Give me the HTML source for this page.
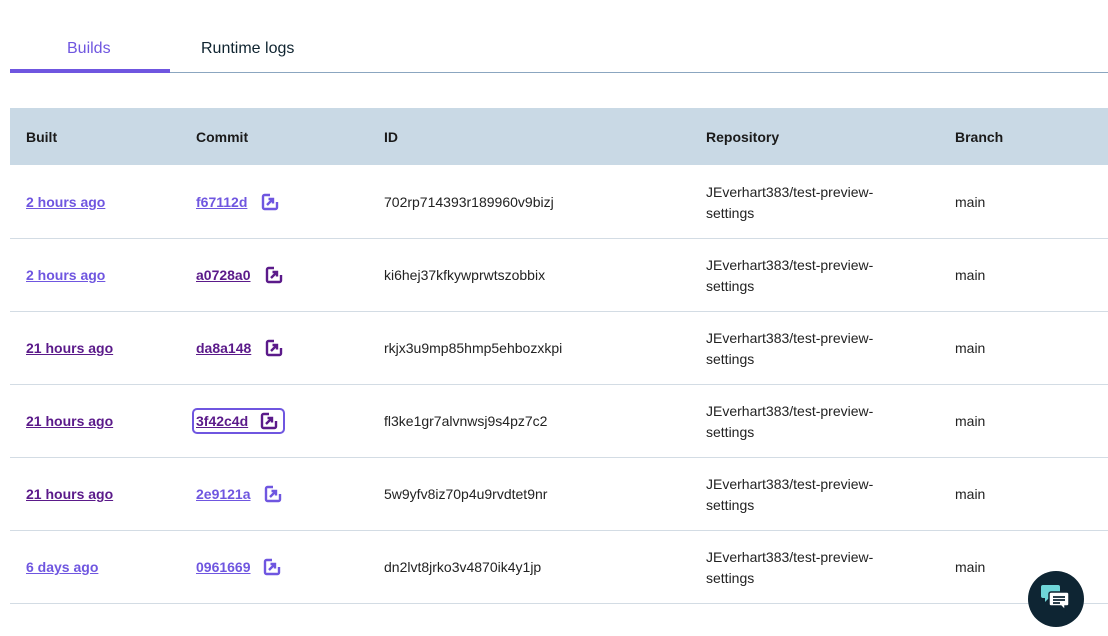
<!DOCTYPE html>
<html><head><meta charset="utf-8"><style>
*{margin:0;padding:0;box-sizing:border-box}
body{width:1108px;height:636px;background:#fff;font-family:"Liberation Sans",sans-serif;position:relative;overflow:hidden;color:#222}
.a{position:absolute;white-space:nowrap}
.tab{font-size:16px;top:40px}
.hdr{position:absolute;left:10px;top:108px;width:1098px;height:57px;background:#c9d9e5}
.h{font-weight:bold;font-size:14px;color:#1a1a1a;top:129px}
.line{position:absolute;left:10px;width:1098px;height:1px;background:#d3dce4}
.t{font-size:14px;color:#222}
a{font-size:14px;font-weight:bold;text-decoration:underline;color:#6f56e0}
a.v{color:#5b1a8a}
svg{position:absolute}
</style></head><body>
<div class="a tab" style="left:67px;color:#6f56e0">Builds</div>
<div class="a tab" style="left:201px;color:#0f2430">Runtime logs</div>
<div style="position:absolute;left:10px;top:72px;width:1098px;height:1px;background:#8ba6c0"></div>
<div style="position:absolute;left:10px;top:69px;width:160px;height:4px;background:#6f56e0"></div>
<div class="hdr"></div>
<div class="a h" style="left:26px">Built</div>
<div class="a h" style="left:196px">Commit</div>
<div class="a h" style="left:384px">ID</div>
<div class="a h" style="left:706px">Repository</div>
<div class="a h" style="left:955px">Branch</div>

<div class="line" style="top:238px"></div>
<div class="line" style="top:311px"></div>
<div class="line" style="top:384px"></div>
<div class="line" style="top:457px"></div>
<div class="line" style="top:530px"></div>
<div class="line" style="top:603px"></div>

<a class="a" style="left:26px;top:194px">2 hours ago</a>
<a class="a" style="left:196px;top:194px">f67112d</a>
<div class="a t" style="left:384px;top:194px">702rp714393r189960v9bizj</div>

<a class="a" style="left:26px;top:267px">2 hours ago</a>
<a class="a v" style="left:196px;top:267px">a0728a0</a>
<div class="a t" style="left:384px;top:267px">ki6hej37kfkywprwtszobbix</div>

<a class="a v" style="left:26px;top:340px">21 hours ago</a>
<a class="a v" style="left:196px;top:340px">da8a148</a>
<div class="a t" style="left:384px;top:340px">rkjx3u9mp85hmp5ehbozxkpi</div>

<a class="a v" style="left:26px;top:413px">21 hours ago</a>
<div style="position:absolute;left:192px;top:408px;width:93px;height:26px;border:2px solid #6f56e0;border-radius:5px"></div>
<a class="a v" style="left:196px;top:413px">3f42c4d</a>
<div class="a t" style="left:384px;top:413px">fl3ke1gr7alvnwsj9s4pz7c2</div>

<a class="a v" style="left:26px;top:486px">21 hours ago</a>
<a class="a" style="left:196px;top:486px">2e9121a</a>
<div class="a t" style="left:384px;top:486px">5w9yfv8iz70p4u9rvdtet9nr</div>

<a class="a" style="left:26px;top:559px">6 days ago</a>
<a class="a" style="left:196px;top:559px">0961669</a>
<div class="a t" style="left:384px;top:559px">dn2lvt8jrko3v4870ik4y1jp</div>

<div class="a t" style="left:706px;top:182px;line-height:21px">JEverhart383/test-preview-<br>settings</div>
<div class="a t" style="left:706px;top:255px;line-height:21px">JEverhart383/test-preview-<br>settings</div>
<div class="a t" style="left:706px;top:328px;line-height:21px">JEverhart383/test-preview-<br>settings</div>
<div class="a t" style="left:706px;top:401px;line-height:21px">JEverhart383/test-preview-<br>settings</div>
<div class="a t" style="left:706px;top:474px;line-height:21px">JEverhart383/test-preview-<br>settings</div>
<div class="a t" style="left:706px;top:547px;line-height:21px">JEverhart383/test-preview-<br>settings</div>
<div class="a t" style="left:955px;top:194px">main</div>
<div class="a t" style="left:955px;top:267px">main</div>
<div class="a t" style="left:955px;top:340px">main</div>
<div class="a t" style="left:955px;top:413px">main</div>
<div class="a t" style="left:955px;top:486px">main</div>
<div class="a t" style="left:955px;top:559px">main</div>

<svg style="left:261px;top:193px" width="18" height="18" viewBox="0 0 18 18" fill="none" stroke="#6f56e0" stroke-width="2.4"><path d="M9 2H3.5A1.5 1.5 0 0 0 2 3.5v11A1.5 1.5 0 0 0 3.5 16h11a1.5 1.5 0 0 0 1.5-1.5V9"/><path d="M6 12l6-6M7.5 6H12v4.5"/></svg>
<svg style="left:265px;top:266px" width="18" height="18" viewBox="0 0 18 18" fill="none" stroke="#5b1a8a" stroke-width="2.4"><path d="M9 2H3.5A1.5 1.5 0 0 0 2 3.5v11A1.5 1.5 0 0 0 3.5 16h11a1.5 1.5 0 0 0 1.5-1.5V9"/><path d="M6 12l6-6M7.5 6H12v4.5"/></svg>
<svg style="left:265px;top:339px" width="18" height="18" viewBox="0 0 18 18" fill="none" stroke="#5b1a8a" stroke-width="2.4"><path d="M9 2H3.5A1.5 1.5 0 0 0 2 3.5v11A1.5 1.5 0 0 0 3.5 16h11a1.5 1.5 0 0 0 1.5-1.5V9"/><path d="M6 12l6-6M7.5 6H12v4.5"/></svg>
<svg style="left:260px;top:412px" width="18" height="18" viewBox="0 0 18 18" fill="none" stroke="#5b1a8a" stroke-width="2.4"><path d="M9 2H3.5A1.5 1.5 0 0 0 2 3.5v11A1.5 1.5 0 0 0 3.5 16h11a1.5 1.5 0 0 0 1.5-1.5V9"/><path d="M6 12l6-6M7.5 6H12v4.5"/></svg>
<svg style="left:264px;top:485px" width="18" height="18" viewBox="0 0 18 18" fill="none" stroke="#6f56e0" stroke-width="2.4"><path d="M9 2H3.5A1.5 1.5 0 0 0 2 3.5v11A1.5 1.5 0 0 0 3.5 16h11a1.5 1.5 0 0 0 1.5-1.5V9"/><path d="M6 12l6-6M7.5 6H12v4.5"/></svg>
<svg style="left:263px;top:558px" width="18" height="18" viewBox="0 0 18 18" fill="none" stroke="#6f56e0" stroke-width="2.4"><path d="M9 2H3.5A1.5 1.5 0 0 0 2 3.5v11A1.5 1.5 0 0 0 3.5 16h11a1.5 1.5 0 0 0 1.5-1.5V9"/><path d="M6 12l6-6M7.5 6H12v4.5"/></svg>

<div style="position:absolute;left:1028px;top:571px;width:56px;height:56px;border-radius:50%;background:#0e2533"></div>
<svg style="left:1040px;top:584px" width="32" height="30" viewBox="0 0 32 30">
<path d="M3 1h15a2 2 0 0 1 2 2v9a2 2 0 0 1-2 2H9l-4 4v-4H3a2 2 0 0 1-2-2V3a2 2 0 0 1 2-2z" fill="#6fd6d8"/>
<path d="M11 8h16a2 2 0 0 1 2 2v10a2 2 0 0 1-2 2h-2v4l-4-4H11a2 2 0 0 1-2-2V10a2 2 0 0 1 2-2z" fill="#fff" stroke="#0e2533" stroke-width="1.5"/>
<path d="M13 13h12M13 16h12M13 19h7" stroke="#0e2533" stroke-width="1.8"/>
</svg>
</body></html>
